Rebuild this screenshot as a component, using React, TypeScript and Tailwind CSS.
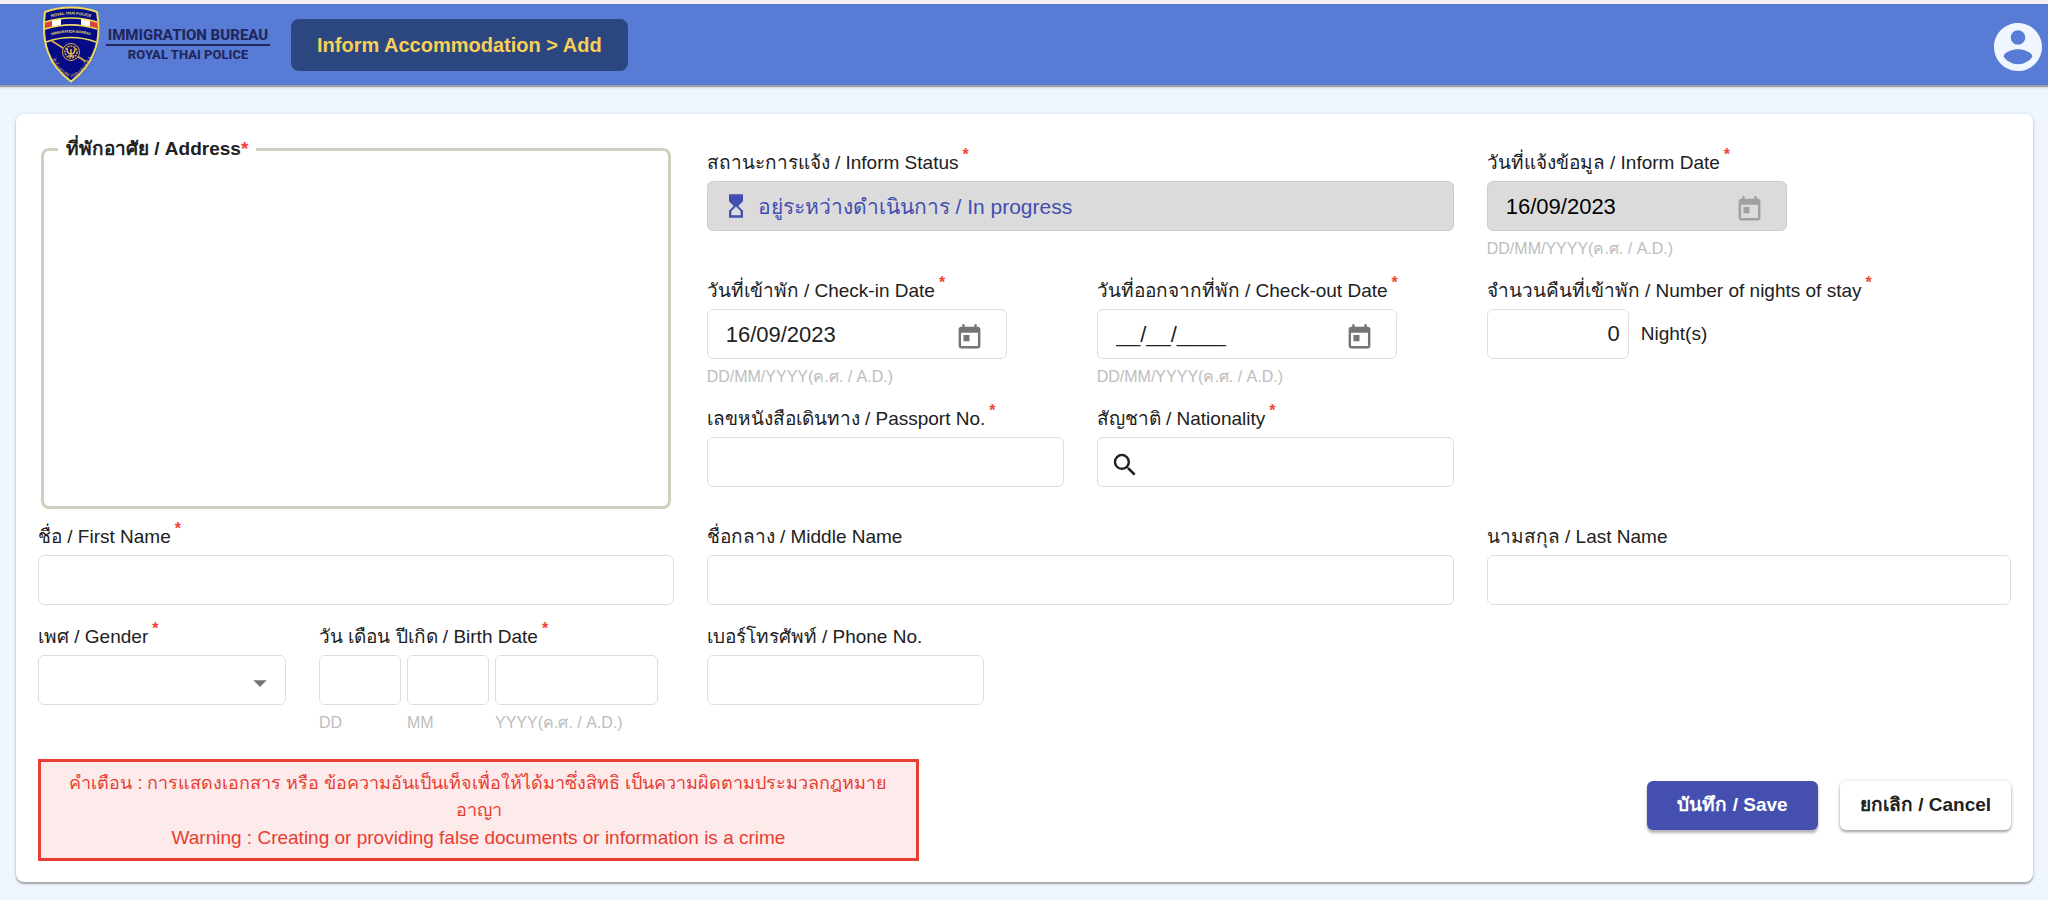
import { useState } from 'react';
import type { ReactNode } from 'react';
import { MdToday, MdSearch, MdHourglassTop, MdArrowDropDown } from 'react-icons/md';

const inputBase = 'h-[50px] rounded-md border border-[#dedede] bg-white px-[18px] text-[22px] text-[#212121] outline-none focus:border-[#3f51b5]';
const disabledBox = 'rounded-md border border-[#cdcdcd] bg-[#dbdbdb]';

interface FieldProps {
    id: string;
    label: string;
    required?: boolean;
    hint?: string;
    className?: string;
    children: ReactNode;
}

const Field = ({ id, label, required, hint, className = '', children }: FieldProps) => (
    <div className={`flex flex-col items-start ${className}`}>
        <label htmlFor={id} className="mb-1.5 flex h-6 items-center gap-1 whitespace-nowrap text-[19px] leading-6">
            <span>{label}</span>
            {required && <span className="self-start text-base leading-2 font-bold text-[#f44336]">*</span>}
        </label>
        {children}
        {hint && <Hint>{hint}</Hint>}
    </div>
);

const Hint = ({ children }: { children: ReactNode }) => (
    <p className="mt-1.5 h-6 whitespace-nowrap text-base leading-6 text-[#bdbdbd]">{children}</p>
);

interface DateInputProps {
    id: string;
    initial: string;
    disabled?: boolean;
}

const DateInput = ({ id, initial, disabled }: DateInputProps) => {
    const [value, setValue] = useState(initial);

    return (
        <div className={`flex h-[50px] w-[300px] items-center pr-[22px] pl-[18px] ${disabled ? disabledBox : 'rounded-md border border-[#dedede] bg-white'}`}>
            <input
                id={id}
                value={value}
                disabled={disabled}
                onChange={(e) => setValue(e.target.value)}
                className={`min-w-0 flex-1 bg-transparent text-[22px] outline-none ${disabled ? 'text-black' : 'text-[#212121]'}`}
            />
            <button type="button" aria-label="Open calendar" disabled={disabled} className={`pt-1.5 ${disabled ? 'text-[#a0a0a0]' : 'text-[#757575]'}`}>
                <MdToday size={29} />
            </button>
        </div>
    );
};

const Shield = () => (
    <svg width="57" height="78" viewBox="0 0 57 78" aria-hidden="true">
        <defs>
            <path id="arc-top" d="M3 13 Q28 4 53 13" />
            <path id="arc-mid" d="M3 31 Q28 22 53 31" />
            <path id="arc-low" d="M6 46 Q14 69 28 71 Q42 69 50 46" />
        </defs>
        <path d="M29 78 Q46 64 52 47 Q57 30 55 10 Q58 40 49 54 Q42 68 29 78z" fill="#33477f" />
        <path d="M28 1.5 Q42 1.5 54 6 Q58 30 51 46 Q45 63 28 75.5 Q11 63 5 46 Q-1 30 2 6 Q14 1.5 28 1.5z" fill="#050b85" stroke="#f0dc5a" strokeWidth="2" />
        <path d="M2 16 Q28 8 54 16 L54 23 Q28 15 2 23z" fill="#fff" />
        <path d="M2 16 Q5 15 9 14 V21 Q5 22 2 23z M54 16 Q51 15 47 14 V21 Q51 22 54 23z" fill="#d8433c" />
        <path d="M18 12 Q28 10.5 38 12 V19 Q28 17.5 18 19z" fill="#050b85" />
        <path d="M2 16 Q28 8 54 16 M2 23 Q28 15 54 23 M3 36 Q28 27 53 36" fill="none" stroke="#f0dc5a" strokeWidth="1.5" />
        <text fill="#f3e26a" fontSize="4" fontWeight="700" textAnchor="middle">
            <textPath href="#arc-top" startOffset="50%">ROYAL THAI POLICE</textPath>
        </text>
        <text fill="#f3e26a" fontSize="3.5" fontWeight="700" textAnchor="middle">
            <textPath href="#arc-mid" startOffset="50%">IMMIGRATION BUREAU</textPath>
        </text>
        <path d="M9 35 L20 42 M34 50 L42 55" stroke="#d9a64e" strokeWidth="1.8" strokeLinecap="round" />
        <circle cx="28" cy="46" r="8.5" fill="#0a1066" stroke="#d9a64e" />
        <circle cx="28" cy="46" r="6" fill="none" stroke="#d9a64e" strokeWidth="1.5" strokeDasharray="2 1" />
        <path d="M24 42 Q24 48 28 48 Q32 48 32 42 M28 43 V51 M25 50 H31" fill="none" stroke="#e8b95c" strokeWidth="1.5" />
        <text fill="#d9b95e" fontSize="5" textAnchor="middle">
            <textPath href="#arc-low" startOffset="50%">สำนักงานตรวจคนเข้าเมือง</textPath>
        </text>
    </svg>
);

const Header = () => (
    <header className="flex h-[87px] items-center border-t-4 border-b-2 border-t-[#f3f3f3] border-b-[#9a9fa8] bg-[#587cd6] pr-1.5 pl-[43px] shadow-sm">
        <Shield />
        <div className="ml-1.5 flex w-[164px] flex-col items-center font-['Roboto','Liberation_Sans',sans-serif] font-extrabold whitespace-nowrap text-[#22265c]">
            <span className="text-[15px] leading-4">IMMIGRATION BUREAU</span>
            <span className="my-px h-0.5 w-full bg-[#22265c]" />
            <span className="text-[13px] leading-4">ROYAL THAI POLICE</span>
        </div>
        <h1 className="ml-[21px] flex h-[52px] items-center rounded-lg bg-[#2c477f] px-[26px] text-xl font-bold text-[#f8cf58]">
            Inform Accommodation &gt; Add
        </h1>
        <button type="button" aria-label="Account" className="mt-1 ml-auto text-[#eff6ff]">
            <svg className="size-12" viewBox="2 2 20 20" fill="currentColor">
                <path d="M12 2C6.48 2 2 6.48 2 12s4.48 10 10 10 10-4.48 10-10S17.52 2 12 2zm0 3c1.66 0 3 1.34 3 3s-1.34 3-3 3-3-1.34-3-3 1.34-3 3-3zm0 14.2c-2.5 0-4.71-1.28-6-3.22.03-1.99 4-3.08 6-3.08 1.99 0 5.97 1.09 6 3.08-1.29 1.94-3.5 3.22-6 3.22z" />
            </svg>
        </button>
    </header>
);

export default function App() {
    return (
        <div className="min-h-screen bg-[#eff6fe] font-['Liberation_Sans','Noto_Sans',sans-serif] text-[#212121]">
            <Header />

            <main className="pt-[27px] pr-[15px] pb-4 pl-4">
                <form className="rounded-lg bg-white px-[22px] pt-[23px] pb-[21px] shadow-[0_2px_2px_rgba(0,0,0,0.3),0_0_4px_rgba(0,0,0,0.1)]">
                    <div className="grid grid-cols-36 gap-x-[33px]">
                        {/* Address */}
                        <fieldset className="col-span-12 mx-[3px] rounded-lg border-[3px] border-[#cfd0be] px-3.5">
                            <legend id="address-label" className="flex px-2 text-[19px] leading-6 font-bold">
                                <span>ที่พักอาศัย / Address</span>
                                <span className="text-[#f44336]">*</span>
                            </legend>
                            <textarea aria-labelledby="address-label" className="block h-full w-full resize-none text-[19px] outline-none" />
                        </fieldset>

                        {/* Stay details */}
                        <div className="col-span-24 grid grid-cols-24 gap-x-[33px] gap-y-[18px] pt-3.5 pb-[22px]">
                            <Field id="status" label="สถานะการแจ้ง / Inform Status" required className="col-span-14">
                                <div className={`flex h-[50px] w-full items-center gap-2 px-3.5 text-[#444db0] ${disabledBox}`}>
                                    <MdHourglassTop size={28} className="shrink-0" />
                                    <input id="status" disabled value="อยู่ระหว่างดำเนินการ / In progress" className="h-full min-w-0 flex-1 bg-transparent text-[21px]" />
                                </div>
                            </Field>
                            <Field id="inform-date" label="วันที่แจ้งข้อมูล / Inform Date" required hint="DD/MM/YYYY(ค.ศ. / A.D.)" className="col-span-10">
                                <DateInput id="inform-date" initial="16/09/2023" disabled />
                            </Field>

                            <Field id="check-in" label="วันที่เข้าพัก / Check-in Date" required hint="DD/MM/YYYY(ค.ศ. / A.D.)" className="col-span-7">
                                <DateInput id="check-in" initial="16/09/2023" />
                            </Field>
                            <Field id="check-out" label="วันที่ออกจากที่พัก / Check-out Date" required hint="DD/MM/YYYY(ค.ศ. / A.D.)" className="col-span-7">
                                <DateInput id="check-out" initial="__/__/____" />
                            </Field>
                            <Field id="nights" label="จำนวนคืนที่เข้าพัก / Number of nights of stay" required className="col-span-10">
                                <div className="flex items-center gap-3 text-[19px]">
                                    <input id="nights" defaultValue="0" className="h-[50px] w-[142px] rounded-md border border-[#dedede] bg-white px-2 text-right text-[22px] outline-none" />
                                    Night(s)
                                </div>
                            </Field>

                            <Field id="passport" label="เลขหนังสือเดินทาง / Passport No." required className="col-span-7">
                                <input id="passport" className={`w-full ${inputBase}`} />
                            </Field>
                            <Field id="nationality" label="สัญชาติ / Nationality" required className="col-span-7">
                                <div className="flex h-[50px] w-full items-center gap-2 rounded-md border border-[#dedede] bg-white px-3">
                                    <MdSearch size={30} className="mt-1.5 shrink-0" />
                                    <input id="nationality" className="min-w-0 flex-1 text-[22px] outline-none" />
                                </div>
                            </Field>
                        </div>

                        {/* Name */}
                        <Field id="first-name" label="ชื่อ / First Name" required className="col-span-12 mt-4">
                            <input id="first-name" className={`w-full ${inputBase}`} />
                        </Field>
                        <Field id="middle-name" label="ชื่อกลาง / Middle Name" className="col-span-14 mt-4">
                            <input id="middle-name" className={`w-full ${inputBase}`} />
                        </Field>
                        <Field id="last-name" label="นามสกุล / Last Name" className="col-span-10 mt-4">
                            <input id="last-name" className={`w-full ${inputBase}`} />
                        </Field>

                        {/* Personal */}
                        <div className="col-span-12 mt-5 flex gap-[33px]">
                            <Field id="gender" label="เพศ / Gender" required className="w-[248px]">
                                <div className="relative w-full">
                                    <select id="gender" defaultValue="" className={`w-full appearance-none ${inputBase}`}>
                                        <option value=""></option>
                                        <option value="M">ชาย / Male</option>
                                        <option value="F">หญิง / Female</option>
                                    </select>
                                    <MdArrowDropDown size={32} className="pointer-events-none absolute top-3 right-2.5 text-[#757575]" />
                                </div>
                            </Field>
                            <Field id="birth-day" label="วัน เดือน ปีเกิด / Birth Date" required>
                                <div className="flex gap-1.5">
                                    <div className="w-[82px]">
                                        <input id="birth-day" className={`w-full ${inputBase}`} />
                                        <Hint>DD</Hint>
                                    </div>
                                    <div className="w-[82px]">
                                        <input aria-label="Birth month" className={`w-full ${inputBase}`} />
                                        <Hint>MM</Hint>
                                    </div>
                                    <div className="w-[163px]">
                                        <input aria-label="Birth year" className={`w-full ${inputBase}`} />
                                        <Hint>YYYY(ค.ศ. / A.D.)</Hint>
                                    </div>
                                </div>
                            </Field>
                        </div>
                        <Field id="phone" label="เบอร์โทรศัพท์ / Phone No." className="col-span-14 mt-5">
                            <input id="phone" className={`w-[277px] ${inputBase}`} />
                        </Field>
                    </div>

                    <div className="mt-6 flex items-start justify-between">
                        <div className="w-[881px] border-[3px] border-[#e83d32] bg-[#fdeaea] px-5 pt-2 pb-[7px] text-center text-[19px] leading-[27px] text-[#e83d32]">
                            <p className="text-lg leading-[27px]">คำเตือน : การแสดงเอกสาร หรือ ข้อความอันเป็นเท็จเพื่อให้ได้มาซึ่งสิทธิ เป็นความผิดตามประมวลกฎหมายอาญา</p>
                            <p>Warning : Creating or providing false documents or information is a crime</p>
                        </div>
                        <div className="mt-[22px] flex gap-[22px] text-[19px] font-bold">
                            <button type="submit" className="h-[49px] w-[171px] rounded-md bg-[#444fb0] text-white shadow-[0_3px_3px_rgba(0,0,0,0.3)]">
                                บันทึก / Save
                            </button>
                            <button type="button" className="h-[49px] w-[171px] rounded-md bg-white shadow-[0_2px_3px_rgba(0,0,0,0.35),0_0_4px_rgba(0,0,0,0.1)]">
                                ยกเลิก / Cancel
                            </button>
                        </div>
                    </div>
                </form>
            </main>
        </div>
    );
}
